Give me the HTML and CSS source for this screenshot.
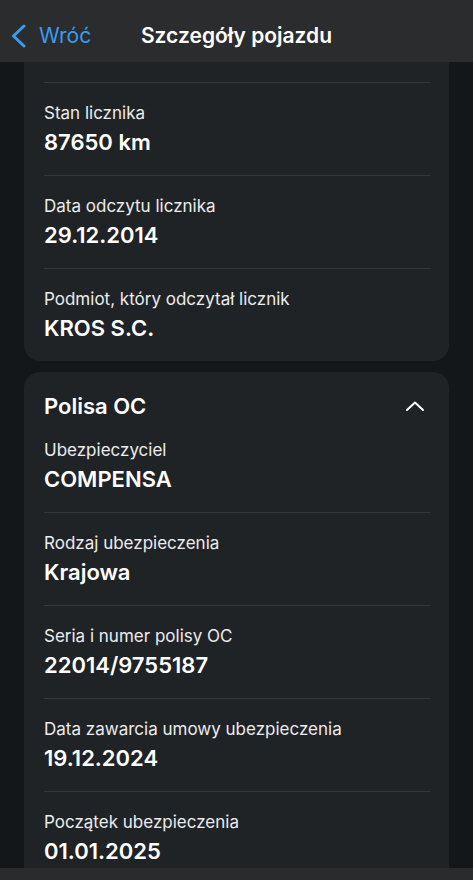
FILE: index.html
```html
<!DOCTYPE html>
<html lang="pl">
  <head>
    <meta charset="UTF-8" />
    <meta name="viewport" content="width=device-width, initial-scale=1.0" />
    <title>Szczegóły pojazdu</title>
    <link rel="stylesheet" href="styles.css">
  </head>
  <body>
    <header class="nav">
      <a class="back" href="#">
        <svg class="back-icon" width="18" height="24" viewBox="0 0 18 24">
          <path d="M14 2 L3.5 12 L14 22" fill="none" stroke="#3a9bf0" stroke-width="3" stroke-linecap="round" stroke-linejoin="round" />
        </svg>
        <span>Wróć</span>
      </a>
      <h1 class="nav-title">Szczegóły pojazdu</h1>
    </header>

    <main class="content">
      <!-- Odczyt licznika -->
      <section class="card card-cut">
        <div class="row divided">
          <div class="label">Stan licznika</div>
          <div class="value">87650 km</div>
        </div>
        <div class="row divided">
          <div class="label">Data odczytu licznika</div>
          <div class="value">29.12.2014</div>
        </div>
        <div class="row divided">
          <div class="label">Podmiot, który odczytał licznik</div>
          <div class="value">KROS S.C.</div>
        </div>
      </section>

      <!-- Polisa OC -->
      <section class="card">
        <div class="card-head">
          <h2>Polisa OC</h2>
          <svg class="chevron" width="20" height="12" viewBox="0 0 20 12">
            <path d="M2 10 L10 2.5 L18 10" fill="none" stroke="#fff" stroke-width="2" stroke-linecap="round" stroke-linejoin="round" />
          </svg>
        </div>
        <div class="row first">
          <div class="label">Ubezpieczyciel</div>
          <div class="value">COMPENSA</div>
        </div>
        <div class="row divided">
          <div class="label">Rodzaj ubezpieczenia</div>
          <div class="value">Krajowa</div>
        </div>
        <div class="row divided">
          <div class="label">Seria i numer polisy OC</div>
          <div class="value">22014/9755187</div>
        </div>
        <div class="row divided">
          <div class="label">Data zawarcia umowy ubezpieczenia</div>
          <div class="value">19.12.2024</div>
        </div>
        <div class="row divided">
          <div class="label">Początek ubezpieczenia</div>
          <div class="value">01.01.2025</div>
        </div>
      </section>
    </main>

    <footer class="bottom-bar"></footer>
  </body>
</html>
```

FILE: styles.css
```css
body {
  font-family: Inter, "Noto Sans", sans-serif;
  background-color: #14171a;
  color: #fff;
  margin: 0;
  height: 880px;
  display: flex;
  flex-direction: column;
  overflow: hidden;
}

.nav {
  height: 62px;
  flex-shrink: 0;
  background-color: #2b2c2e;
  display: flex;
  align-items: center;
  position: relative;
}

.back {
  display: flex;
  align-items: center;
  gap: 11px;
  padding-left: 10px;
  color: #3a9bf0;
  text-decoration: none;
  font-size: 21px;
  margin-top: 9px;
}

.nav-title {
  position: absolute;
  left: 0;
  right: 0;
  top: 0;
  line-height: 72px;
  margin: 0;
  text-align: center;
  font-size: 21px;
  font-weight: 600;
  pointer-events: none;
}

.content {
  flex: 1;
  overflow: hidden;
  padding: 0 24px;
  display: flex;
  flex-direction: column;
  gap: 11px;
}

.card {
  background-color: #202326;
  border-radius: 16px;
  padding: 0 18px 0 20px;
  flex-shrink: 0;
}

.card-cut {
  border-top-left-radius: 0;
  border-top-right-radius: 0;
  padding-top: 20px;
}

.card-head {
  display: flex;
  align-items: center;
  justify-content: space-between;
  padding-top: 20px;
  height: 28px;
}

.card-head h2 {
  margin: 0;
  font-size: 22px;
  font-weight: 600;
}

.chevron {
  margin-right: 6px;
}

.row {
  padding: 19px 0 20px;
}

.row.divided {
  border-top: 1px solid #33363a;
}

.label {
  font-size: 17px;
  line-height: 22px;
  color: #ececee;
}

.value {
  font-size: 22px;
  line-height: 26px;
  font-weight: 600;
  margin-top: 5px;
}

.bottom-bar {
  height: 12px;
  flex-shrink: 0;
  background-color: #2a2b2d;
}
```
